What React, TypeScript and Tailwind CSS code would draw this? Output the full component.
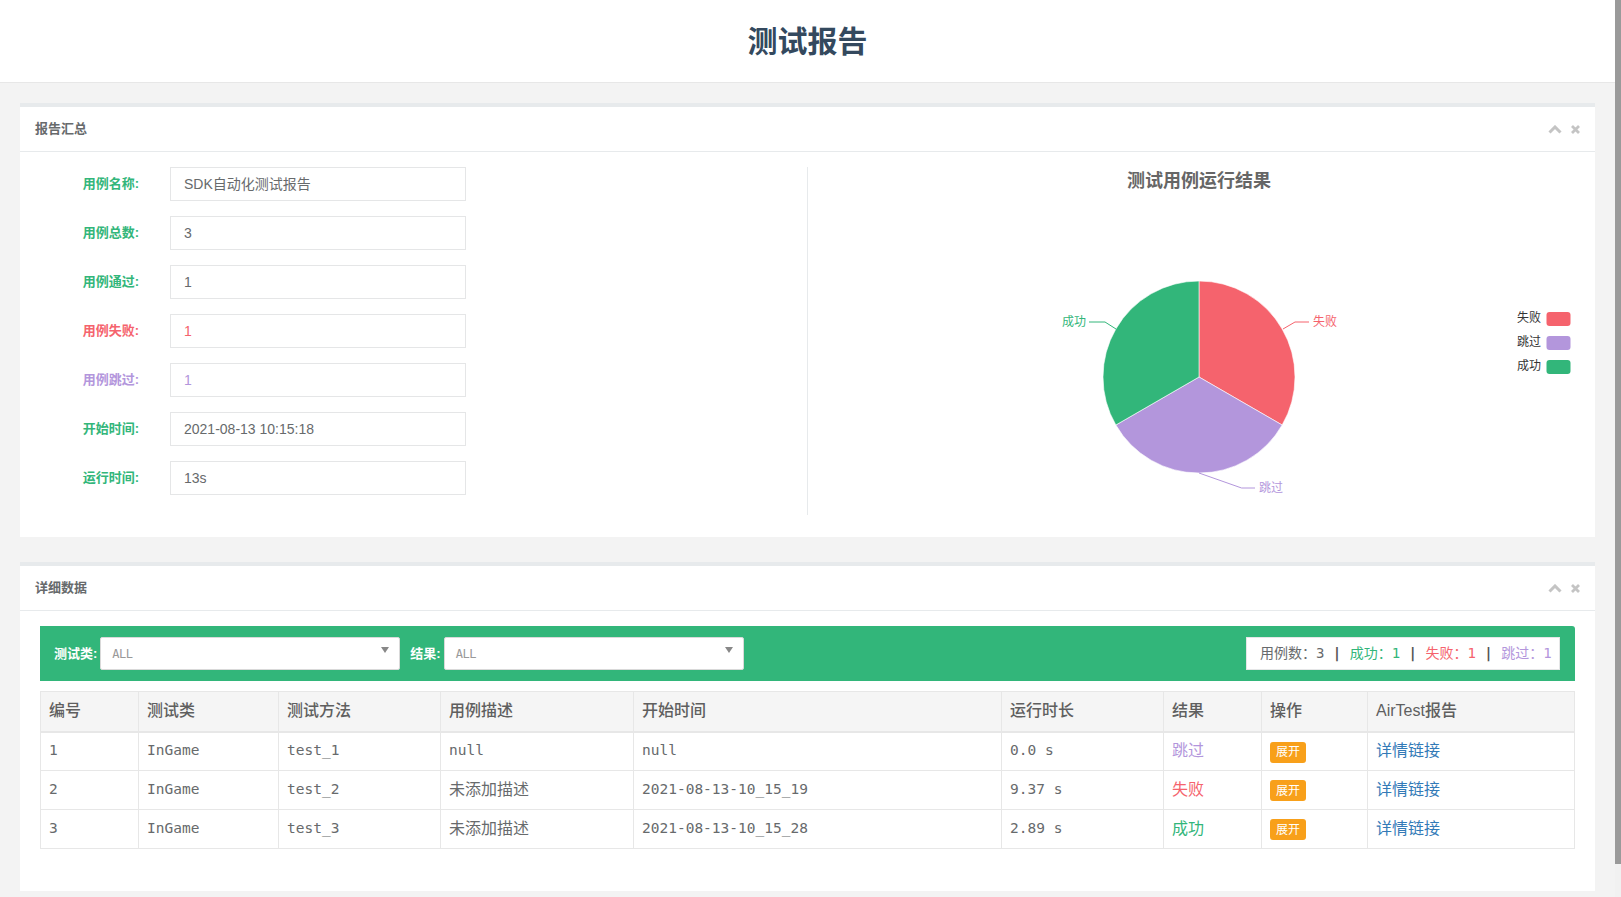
import React from 'react';

const GREEN = '#32b67a';
const RED = '#f5636d';
const PURPLE = '#b396dc';

const sans = "font-['Liberation_Sans','Noto_Sans_CJK_SC',sans-serif]";
const mono = "font-['DejaVu_Sans_Mono','Noto_Sans_CJK_SC',monospace]";

const PanelTools: React.FC = () => (
  <div className="flex items-center gap-[9px]">
    <svg width="14" height="9" viewBox="0 0 14 9">
      <polyline points="1.5,7.5 7,2 12.5,7.5" fill="none" stroke="#c4c4c4" strokeWidth="3" />
    </svg>
    <svg width="9" height="9" viewBox="0 0 9 9">
      <path d="M1 1 L8 8 M8 1 L1 8" stroke="#c4c4c4" strokeWidth="2.8" />
    </svg>
  </div>
);

const Panel: React.FC<{ title: string; className?: string; children: React.ReactNode }> = ({
  title,
  className,
  children,
}) => (
  <div className={`bg-white border-t-4 border-[#e7eaec] ${className ?? ''}`}>
    <div className="h-[45px] flex items-center justify-between px-[15px] border-b border-[#e7eaec]">
      <span className="text-[13px] font-semibold text-[#676a6c]">{title}</span>
      <PanelTools />
    </div>
    {children}
  </div>
);

const summary = [
  { label: '用例名称:', value: 'SDK自动化测试报告', color: GREEN, valueColor: '#676a6c' },
  { label: '用例总数:', value: '3', color: GREEN, valueColor: '#676a6c' },
  { label: '用例通过:', value: '1', color: GREEN, valueColor: '#676a6c' },
  { label: '用例失败:', value: '1', color: RED, valueColor: RED },
  { label: '用例跳过:', value: '1', color: PURPLE, valueColor: PURPLE },
  { label: '开始时间:', value: '2021-08-13 10:15:18', color: GREEN, valueColor: '#676a6c' },
  { label: '运行时间:', value: '13s', color: GREEN, valueColor: '#676a6c' },
];

const PieChart: React.FC = () => (
  <svg width="767" height="348" className="block">
    <text x="391" y="15" textAnchor="middle" dominantBaseline="middle" fontSize="18" fontWeight="bold" fill="#666">
      测试用例运行结果
    </text>
    <path d="M391,210 L391,114 A96,96 0 0,1 474.14,258 Z" fill={RED} stroke="#fff" strokeWidth="0.6" />
    <path d="M391,210 L474.14,258 A96,96 0 0,1 307.86,258 Z" fill={PURPLE} stroke="#fff" strokeWidth="0.6" />
    <path d="M391,210 L307.86,258 A96,96 0 0,1 391,114 Z" fill={GREEN} stroke="#fff" strokeWidth="0.6" />

    <polyline points="475,162 487,155 501,155" fill="none" stroke={RED} strokeWidth="1" />
    <text x="505" y="156" dominantBaseline="middle" fontSize="12" fill={RED}>失败</text>

    <polyline points="308,162 297,155 281,155" fill="none" stroke={GREEN} strokeWidth="1" />
    <text x="278" y="156" textAnchor="end" dominantBaseline="middle" fontSize="12" fill={GREEN}>成功</text>

    <polyline points="391,306 433.6,321 447,321" fill="none" stroke={PURPLE} strokeWidth="1" />
    <text x="451" y="322" dominantBaseline="middle" fontSize="12" fill={PURPLE}>跳过</text>

    {[
      { name: '失败', color: RED, y: 152 },
      { name: '跳过', color: PURPLE, y: 176 },
      { name: '成功', color: GREEN, y: 200 },
    ].map((l) => (
      <g key={l.name}>
        <text x="733" y={l.y} textAnchor="end" dominantBaseline="middle" fontSize="12" fill="#333">
          {l.name}
        </text>
        <rect x="738.5" y={l.y - 7} width="24" height="14" rx="3" fill={l.color} />
      </g>
    ))}
  </svg>
);

const Select: React.FC = () => (
  <div className="w-[300px] h-[33px] bg-white border border-[#d9d9d9] rounded-[2px] flex items-center justify-between pl-[11px] pr-[10px]">
    <span className={`${mono} text-[12px] text-[#999] tracking-[-0.5px]`}>ALL</span>
    <svg width="8" height="6" viewBox="0 0 8 6" className="-mt-[8px]">
      <polygon points="0,0 8,0 4,6" fill="#888" />
    </svg>
  </div>
);

type Row = {
  id: string;
  cls: string;
  method: string;
  desc: string;
  start: string;
  dur: string;
  result: string;
  resultColor: string;
};

const rows: Row[] = [
  { id: '1', cls: 'InGame', method: 'test_1', desc: 'null', start: 'null', dur: '0.0 s', result: '跳过', resultColor: PURPLE },
  { id: '2', cls: 'InGame', method: 'test_2', desc: '未添加描述', start: '2021-08-13-10_15_19', dur: '9.37 s', result: '失败', resultColor: RED },
  { id: '3', cls: 'InGame', method: 'test_3', desc: '未添加描述', start: '2021-08-13-10_15_28', dur: '2.89 s', result: '成功', resultColor: GREEN },
];

const colWidths = [98, 140, 162, 193, 368, 162, 98, 106, 207];
const headers = ['编号', '测试类', '测试方法', '用例描述', '开始时间', '运行时长', '结果', '操作', 'AirTest报告'];

const isAscii = (s: string) => /^[\x00-\x7f]*$/.test(s);

const Cell: React.FC<{ text: string; color?: string }> = ({ text, color }) => (
  <td
    className={`h-[39px] px-[8px] border border-[#e7e7e7] ${
      isAscii(text) ? `${mono} text-[14.5px]` : `${sans} text-[16px]`
    }`}
    style={color ? { color } : undefined}
  >
    {text}
  </td>
);

export default function App() {
  return (
    <div className={`flex h-screen overflow-hidden bg-[#f3f3f3] ${sans}`}>
      <div className="flex-1 min-w-0">
        <div className="h-[83px] bg-white border-b border-[#e7e7e7] flex items-center justify-center">
          <h1 className="text-[30px] font-bold text-[#34495e] mt-[1px]">测试报告</h1>
        </div>

        <div className="px-[20px] pt-[20px] pb-[41px]">
          <Panel title="报告汇总" className="mb-[25px]">
            <div className="flex pt-[15px] px-[20px] pb-[22px]">
              <div className="w-1/2 h-[348px] border-r border-[#e7eaec]">
                {summary.map((s) => (
                  <div key={s.label} className="flex items-center h-[34px] mb-[15px]">
                    <label className="w-[99px] text-right text-[13px] font-bold" style={{ color: s.color }}>
                      {s.label}
                    </label>
                    <div
                      className="ml-[31px] w-[296px] h-[34px] border border-[#e5e6e7] flex items-center px-[13px] text-[14px]"
                      style={{ color: s.valueColor }}
                    >
                      {s.value}
                    </div>
                  </div>
                ))}
              </div>
              <div className="w-1/2 h-[348px]">
                <PieChart />
              </div>
            </div>
          </Panel>

          <Panel title="详细数据">
            <div className="pt-[15px] px-[20px] pb-[22px]">
              <div className="h-[55px] bg-[#32b67a] rounded-tr-[3px] flex items-center pl-[14px] pr-[15px]">
                <span className="text-white text-[13px] font-bold mr-[3px]">测试类:</span>
                <Select />
                <span className="text-white text-[13px] font-bold ml-[10px] mr-[3px]">结果:</span>
                <Select />
                <div className={`ml-auto w-[314px] h-[33px] bg-white border border-[#e5e6e7] flex items-center px-[13px] ${mono} text-[14px] whitespace-pre`}>
                  <span className="text-[#676a6c]">用例数：3</span>
                  <span className="text-[#555] font-bold"> | </span>
                  <span style={{ color: GREEN }}>成功：1</span>
                  <span className="text-[#555] font-bold"> | </span>
                  <span style={{ color: RED }}>失败：1</span>
                  <span className="text-[#555] font-bold"> | </span>
                  <span style={{ color: PURPLE }}>跳过：1</span>
                </div>
              </div>

              <table className="mt-[10px] mb-[20px] w-full table-fixed border-collapse text-[#676a6c]">
                <colgroup>
                  {colWidths.map((w, i) => (
                    <col key={i} style={{ width: w }} />
                  ))}
                </colgroup>
                <thead>
                  <tr className="bg-[#f5f5f5]">
                    {headers.map((h) => (
                      <th
                        key={h}
                        className="h-[40px] px-[8px] text-left text-[16px] font-medium text-[#5f5f5f] border border-[#e7e7e7] border-b-2"
                      >
                        {h}
                      </th>
                    ))}
                  </tr>
                </thead>
                <tbody>
                  {rows.map((r) => (
                    <tr key={r.id}>
                      <Cell text={r.id} />
                      <Cell text={r.cls} />
                      <Cell text={r.method} />
                      <Cell text={r.desc} />
                      <Cell text={r.start} />
                      <Cell text={r.dur} />
                      <Cell text={r.result} color={r.resultColor} />
                      <td className="h-[39px] px-[8px] border border-[#e7e7e7]">
                        <span className="inline-flex items-center h-[21px] px-[6px] rounded-[3px] bg-[#f8a01a] text-white text-[12px] align-middle">
                          展开
                        </span>
                      </td>
                      <td className="h-[39px] px-[8px] border border-[#e7e7e7] text-[16px] text-[#337ab7]">详情链接</td>
                    </tr>
                  ))}
                </tbody>
              </table>
            </div>
          </Panel>
        </div>
      </div>

      {/* page scrollbar */}
      <div className="w-[6px] shrink-0 bg-[#f1f1f1]">
        <div className="h-[864px] bg-[#9a9a9a]" />
      </div>
    </div>
  );
}
